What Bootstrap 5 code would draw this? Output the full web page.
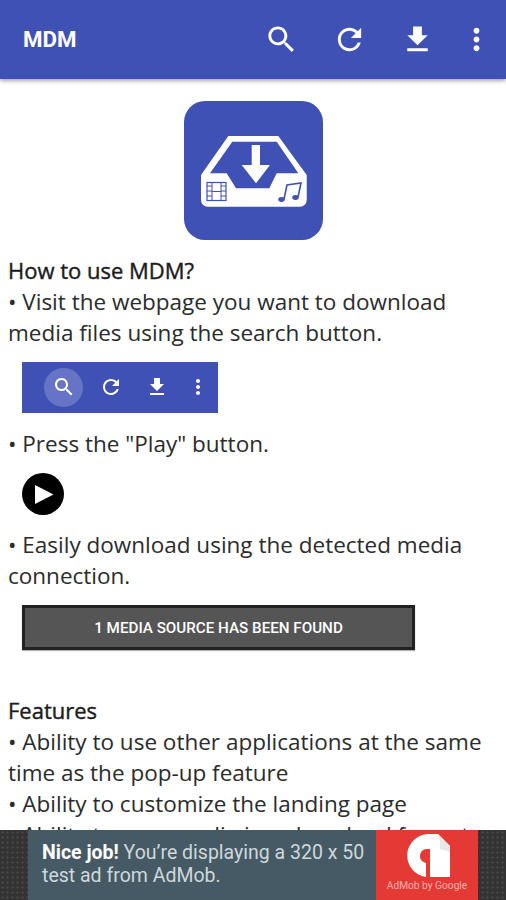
<!DOCTYPE html>
<html lang="en">
<head>
<meta charset="utf-8">
<title>MDM</title>
<link href="https://cdn.jsdelivr.net/npm/bootstrap@5.3.0/dist/css/bootstrap.min.css" rel="stylesheet">
<style>
html,body{height:900px;overflow:hidden;background:#fff}
.app-shell{height:900px}
.app-bar{height:79px;flex:none;background:#3f51b5;padding:0 12.5px 0 23px;box-shadow:0 2px 4px rgba(0,0,0,.35);position:relative;z-index:2}
.app-title{font:700 22.3px/1 Roboto,"Liberation Sans",sans-serif;color:#fff}
.app-actions{gap:33px}
.app-actions svg{width:35px;height:35px;fill:#fff;display:block}
.app-actions .more-act{margin-left:-9px}
.doc{flex:1 1 auto;min-height:0;overflow:hidden;padding:22px 8px 0;font:22.5px/31px "Open Sans","Noto Sans",sans-serif;color:#2b2b2b}
.doc p{margin:0}
.doc .doc-head{font-size:22px;color:#1c1c1c;-webkit-text-stroke:.4px #1c1c1c}
.app-logo{width:139px;height:139px;display:block;margin:0 auto 14.5px}
.mini-bar{width:196px;height:51px;margin:14px 0 15.5px 14px;background:#3f51b5;padding-left:22px;gap:22.5px}
.mini-bar svg{width:24px;height:24px;fill:#fff;display:block}
.mini-hit{width:39px;height:39px;border-radius:50%;background:#6574c4;margin-right:-7px}
.mini-bar .more-act{margin-left:-6px}
.play-ic{width:42px;height:42px;display:block;margin:13.5px 0 14.5px 14px}
.found-bar{width:393px;height:45px;margin:14px 0 45px 14px;padding-top:2px;background:#555;border:3px solid #222;font:500 15.2px/1 Roboto,"Liberation Sans",sans-serif;color:#fff;box-shadow:0 1px 1px rgba(0,0,0,.3)}
.ad-strip{height:70px;flex:none;padding:0 28px;background-color:#333;background-image:radial-gradient(#444 1px,transparent 1.2px);background-size:5px 5px;position:relative}
.ad-copy{width:348px;background:#455a64;padding:11px 0 0 14px;font:19.5px/23px Roboto,"Liberation Sans",sans-serif;color:#cfd8dc}
.ad-copy b{color:#fff;font-weight:700}
.ad-side{width:102px;background:#e53935}
.ad-side svg{display:block;width:102px;height:50px;margin-bottom:1px}
.ad-by{font:10.2px/1 Roboto,"Liberation Sans",sans-serif;color:#f5b0ad;text-align:center;white-space:nowrap}
</style>
</head>
<body>
<div class="app-shell d-flex flex-column">
  <header class="app-bar d-flex align-items-center justify-content-between">
    <div class="app-title">MDM</div>
    <div class="app-actions d-flex align-items-center">
      <svg viewBox="0 0 24 24"><path d="M15.5 14h-.79l-.28-.27C15.41 12.59 16 11.11 16 9.5 16 5.91 13.09 3 9.5 3S3 5.91 3 9.5 5.91 16 9.5 16c1.61 0 3.09-.59 4.23-1.57l.27.28v.79l5 4.99L20.49 19l-4.99-5zm-6 0C7.01 14 5 11.99 5 9.5S7.01 5 9.5 5 14 7.01 14 9.5 11.99 14 9.5 14z"/></svg>
      <svg viewBox="0 0 24 24"><path d="M17.65 6.35C16.2 4.9 14.21 4 12 4c-4.42 0-7.99 3.58-7.99 8s3.57 8 7.99 8c3.73 0 6.84-2.55 7.73-6h-2.08c-.82 2.33-3.04 4-5.65 4-3.31 0-6-2.69-6-6s2.69-6 6-6c1.66 0 3.14.69 4.22 1.78L13 11h7V4l-2.35 2.35z"/></svg>
      <svg viewBox="0 0 24 24"><path d="M19 9h-4V3H9v6H5l7 7 7-7zM5 18v2h14v-2H5z"/></svg>
      <svg class="more-act" viewBox="0 0 24 24"><path d="M12 8c1.1 0 2-.9 2-2s-.9-2-2-2-2 .9-2 2 .9 2 2 2zm0 2c-1.1 0-2 .9-2 2s.9 2 2 2 2-.9 2-2-.9-2-2-2zm0 6c-1.1 0-2 .9-2 2s.9 2 2 2 2-.9 2-2-.9-2-2-2z"/></svg>
    </div>
  </header>
  <main class="doc">
    <svg class="app-logo" viewBox="0 0 139 139">
      <rect width="139" height="139" rx="21" fill="#3f51b5"/>
      <path d="M44.3 35H94.3L122.7 74V99a6.7 6.7 0 0 1-6.7 6.7H23.7A6.7 6.7 0 0 1 17 99V74Z" fill="#fff"/>
      <path d="M48.3 40.7H92.7L114.3 72.3H92.7L85.3 87.3H52L42.7 72.3H26Z" fill="#3f51b5"/>
      <path d="M67.7 44H76V64H86L72 82.3 57.7 64H67.7Z" fill="#fff"/>
      <g fill="none" stroke="#3f51b5">
        <rect x="23" y="81.5" width="19" height="18" stroke-width="1.2"/>
        <path d="M28 81.5V99.5M37 81.5V99.5M28 90.5H37M23 85H28M23 90H28M23 95H28M37 85H42M37 90H42M37 95H42" stroke-width="1"/>
        <path d="M100 98L103 84 117 82 114 96" stroke-width="1.6"/>
      </g>
      <g fill="#3f51b5">
        <ellipse cx="97.500" cy="98.5" rx="3.2" ry="2.4"/>
        <ellipse cx="111.5" cy="96.5" rx="3.2" ry="2.4"/>
      </g>
    </svg>
    <p class="doc-head">How to use MDM?</p>
    <p>• Visit the webpage you want to download media files using the search button.</p>
    <div class="mini-bar d-flex align-items-center">
      <div class="mini-hit d-flex align-items-center justify-content-center">
        <svg viewBox="0 0 24 24"><path d="M15.5 14h-.79l-.28-.27C15.41 12.59 16 11.11 16 9.5 16 5.91 13.09 3 9.5 3S3 5.91 3 9.5 5.91 16 9.5 16c1.61 0 3.09-.59 4.23-1.57l.27.28v.79l5 4.99L20.49 19l-4.99-5zm-6 0C7.01 14 5 11.99 5 9.5S7.01 5 9.5 5 14 7.01 14 9.5 11.99 14 9.5 14z"/></svg>
      </div>
      <svg viewBox="0 0 24 24"><path d="M17.65 6.35C16.2 4.9 14.21 4 12 4c-4.42 0-7.99 3.58-7.99 8s3.57 8 7.99 8c3.73 0 6.84-2.55 7.73-6h-2.08c-.82 2.33-3.04 4-5.65 4-3.31 0-6-2.69-6-6s2.69-6 6-6c1.66 0 3.14.69 4.22 1.78L13 11h7V4l-2.35 2.35z"/></svg>
      <svg viewBox="0 0 24 24"><path d="M19 9h-4V3H9v6H5l7 7 7-7zM5 18v2h14v-2H5z"/></svg>
      <svg class="more-act" viewBox="0 0 24 24"><path d="M12 8c1.1 0 2-.9 2-2s-.9-2-2-2-2 .9-2 2 .9 2 2 2zm0 2c-1.1 0-2 .9-2 2s.9 2 2 2 2-.9 2-2-.9-2-2-2zm0 6c-1.1 0-2 .9-2 2s.9 2 2 2 2-.9 2-2-.9-2-2-2z"/></svg>
    </div>
    <p>• Press the "Play" button.</p>
    <svg class="play-ic" viewBox="0 0 42 42"><circle cx="21" cy="21" r="21" fill="#000"/><path d="M13 12 31.5 21.500 13 31Z" fill="#fff"/></svg>
    <p>• Easily download using the detected media connection.</p>
    <div class="found-bar d-flex align-items-center justify-content-center">1 MEDIA SOURCE HAS BEEN FOUND</div>
    <p class="doc-head">Features</p>
    <p>• Ability to use other applications at the same time as the pop-up feature</p>
    <p>• Ability to customize the landing page</p>
    <p>• Ability to save media in a download format</p>
  </main>
  <footer class="ad-strip d-flex">
    <div class="ad-copy"><b>Nice job!</b> You’re displaying a 320 x 50 test ad from AdMob.</div>
    <div class="ad-side d-flex flex-column">
      <svg viewBox="0 0 102 50"><path d="M52 4H62L74 16V47H54V19H52A7 7 0 0 0 50 33V47A21.600 21.600 0 0 1 52 4Z" fill="#fff"/><path d="M62 4 74 16V22L64 19V11Z" fill="#e9e9e9"/></svg>
      <div class="ad-by">AdMob by Google</div>
    </div>
  </footer>
</div>
<script src="https://cdn.jsdelivr.net/npm/bootstrap@5.3.0/dist/js/bootstrap.bundle.min.js"></script>
</body>
</html>
